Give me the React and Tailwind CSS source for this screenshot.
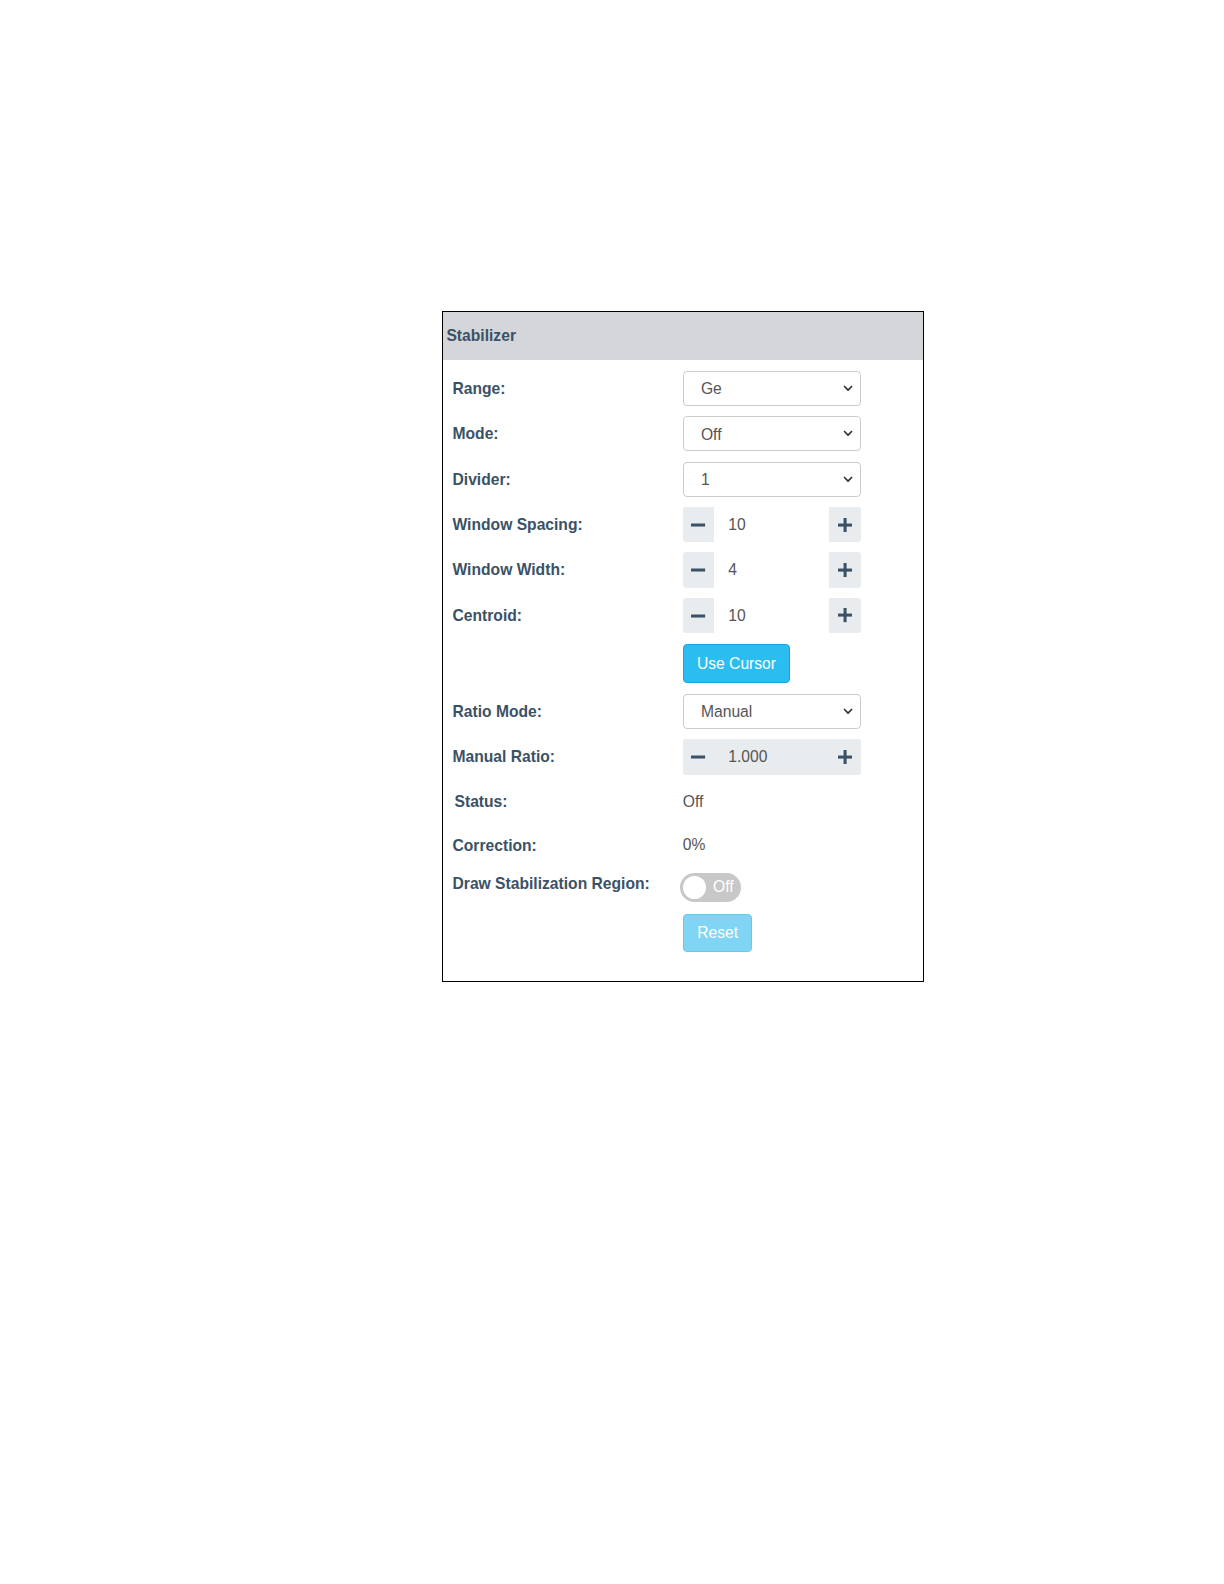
import { useState } from 'react'

const LABEL = 'text-[15.5px] font-bold text-[#3b5166] leading-[17px]'

function Chevron() {
  return (
    <svg width="10" height="7" viewBox="0 0 10 7" className="shrink-0">
      <path d="M1.5 1.5 L5 5 L8.5 1.5" fill="none" stroke="#333" strokeWidth="1.7" strokeLinecap="round" strokeLinejoin="round" />
    </svg>
  )
}

function Select({ value }) {
  return (
    <div className="w-[176px] h-[35px] border border-[#ccc] rounded-[4px] bg-white flex items-center pl-[17px] pr-[6px]">
      <span className="flex-1 text-[15.5px] text-[#555] pt-[1px]">{value}</span>
      <Chevron />
    </div>
  )
}

function Stepper({ value, disabled = false }) {
  return (
    <div className="w-[176px] h-[35px] rounded-[3px] bg-[#e9ecef] flex items-stretch">
      <div className="w-[31px] flex items-center justify-center">
        <svg width="14" height="4" viewBox="0 0 14 4"><rect x="0" y="0.5" width="14" height="3" fill="#3b5166" /></svg>
      </div>
      <div className={`w-[114px] flex items-center pl-[14px] text-[15.5px] text-[#555] ${disabled ? 'bg-[#e9ecef]' : 'bg-white'}`}>
        {value}
      </div>
      <div className="w-[31px] flex items-center justify-center">
        <svg width="14" height="14" viewBox="0 0 14 14">
          <rect x="0" y="5.5" width="14" height="3" fill="#3b5166" />
          <rect x="5.5" y="0" width="3" height="14" fill="#3b5166" />
        </svg>
      </div>
    </div>
  )
}

function Row({ label, children, className = '', labelClass = 'pt-[5px]' }) {
  return (
    <div className={`flex items-start ${className}`}>
      <div className={`w-[228px] ${labelClass}`}>
        {label && <span className={LABEL}>{label}</span>}
      </div>
      <div>{children}</div>
    </div>
  )
}

export default function App() {
  const [draw, setDraw] = useState(false)

  return (
    <div className="bg-white [zoom:1.0101] pt-[308px] pl-[438px] pb-[40px]" style={{ fontFamily: '"Liberation Sans", Arial, sans-serif' }}>
      <div className="w-[477px] h-[664px] border border-black">
        {/* Header */}
        <div className="h-[47px] bg-[#d4d6d9] flex items-center pl-[3px]">
          <span className="text-[15.5px] font-bold text-[#3b5166]">Stabilizer</span>
        </div>

        <div className="pl-[9px] pt-[11px]">
          <Row label="Range:"><Select value="Ge" /></Row>
          <Row label="Mode:" className="mt-[10px]"><Select value="Off" /></Row>
          <Row label="Divider:" className="mt-[10px]"><Select value="1" /></Row>
          <Row label="Window Spacing:" className="mt-[10px]"><Stepper value="10" /></Row>
          <Row label="Window Width:" className="mt-[10px]"><Stepper value="4" /></Row>
          <Row label="Centroid:" className="mt-[10px]"><Stepper value="10" /></Row>
          <Row className="mt-[11px]">
            <button className="h-[38px] px-[13px] rounded-[4px] bg-[#2bbcf0] border border-[#1ca3d9] text-white text-[15.5px]">
              Use Cursor
            </button>
          </Row>
          <Row label="Ratio Mode:" className="mt-[11px]"><Select value="Manual" /></Row>
          <Row label="Manual Ratio:" className="mt-[10px]"><Stepper value="1.000" disabled /></Row>
          <Row label={<span className="ml-[2px]">Status:</span>} className="mt-[11px] h-[35px]" labelClass="pt-[3px]">
            <span className="block pt-[7px] text-[15.5px] leading-[17px] text-[#555]">Off</span>
          </Row>
          <Row label="Correction:" className="mt-[8px] h-[35px]" labelClass="pt-[4px]">
            <span className="block pt-[7px] text-[15.5px] leading-[17px] text-[#555]">0%</span>
          </Row>
          <Row label="Draw Stabilization Region:" className="mt-[8px]" labelClass="-mt-[2px]">
            <button
              onClick={() => setDraw(d => !d)}
              className="-ml-[3px] w-[61px] h-[29px] rounded-full bg-[#c8c8c8] flex items-center pl-[3px]"
            >
              <span className="w-[23px] h-[23px] rounded-full bg-white" />
              <span className="ml-[7px] text-[15.5px] text-white">{draw ? 'On' : 'Off'}</span>
            </button>
          </Row>
          <Row className="mt-[12px]">
            <button className="h-[38px] w-[69px] rounded-[4px] bg-[#80d5f4] border border-[#6bc6ea] text-white text-[15.5px]">
              Reset
            </button>
          </Row>
        </div>
      </div>
    </div>
  )
}
